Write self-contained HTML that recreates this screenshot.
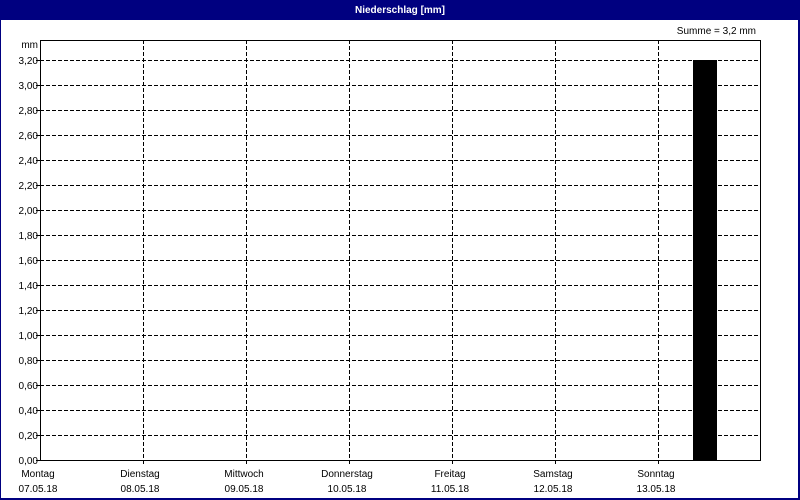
<!DOCTYPE html>
<html><head><meta charset="utf-8"><style>
html,body{margin:0;padding:0;width:800px;height:500px;overflow:hidden;background:#fff}
svg text{font-family:"Liberation Sans",sans-serif;font-size:10px;fill:#000}
</style></head><body>
<svg width="800" height="500" xmlns="http://www.w3.org/2000/svg" shape-rendering="crispEdges">
<rect x="0" y="0" width="800" height="500" fill="#000080"/>
<rect x="1" y="20" width="797" height="478" fill="#fff"/>
<text x="400" y="13" text-anchor="middle" style="fill:#fff;font-weight:bold;font-size:10px">Niederschlag [mm]</text>
<text x="756" y="34" text-anchor="end">Summe = 3,2 mm</text>
<text x="38" y="48" text-anchor="end">mm</text>
<g stroke="#000" stroke-width="1" stroke-dasharray="4,2">
<path d="M40 60.5H760M40 85.5H760M40 110.5H760M40 135.5H760M40 160.5H760M40 185.5H760M40 210.5H760M40 235.5H760M40 260.5H760M40 285.5H760M40 310.5H760M40 335.5H760M40 360.5H760M40 385.5H760M40 410.5H760M40 435.5H760"/>
<path d="M143.5 40V465M246.5 40V465M349.5 40V465M452.5 40V465M555.5 40V465M658.5 40V465"/>
</g>
<rect x="693" y="60" width="24" height="400" fill="#000"/>
<path d="M40.5 40.5H760.5V460.5H40.5Z" fill="none" stroke="#000"/>
<g stroke="#000"><path d="M36 60.5H40M36 85.5H40M36 110.5H40M36 135.5H40M36 160.5H40M36 185.5H40M36 210.5H40M36 235.5H40M36 260.5H40M36 285.5H40M36 310.5H40M36 335.5H40M36 360.5H40M36 385.5H40M36 410.5H40M36 435.5H40M36 460.5H40"/></g>
<g text-anchor="end">
<text x="38" y="64">3,20</text><text x="38" y="89">3,00</text><text x="38" y="114">2,80</text><text x="38" y="139">2,60</text>
<text x="38" y="164">2,40</text><text x="38" y="189">2,20</text><text x="38" y="214">2,00</text><text x="38" y="239">1,80</text>
<text x="38" y="264">1,60</text><text x="38" y="289">1,40</text><text x="38" y="314">1,20</text><text x="38" y="339">1,00</text>
<text x="38" y="364">0,80</text><text x="38" y="389">0,60</text><text x="38" y="414">0,40</text><text x="38" y="439">0,20</text>
<text x="38" y="464">0,00</text>
</g>
<g text-anchor="middle">
<text x="38" y="477">Montag</text><text x="38" y="492">07.05.18</text>
<text x="140" y="477">Dienstag</text><text x="140" y="492">08.05.18</text>
<text x="244" y="477">Mittwoch</text><text x="244" y="492">09.05.18</text>
<text x="347" y="477">Donnerstag</text><text x="347" y="492">10.05.18</text>
<text x="450" y="477">Freitag</text><text x="450" y="492">11.05.18</text>
<text x="553" y="477">Samstag</text><text x="553" y="492">12.05.18</text>
<text x="656" y="477">Sonntag</text><text x="656" y="492">13.05.18</text>
</g>
</svg>
</body></html>
